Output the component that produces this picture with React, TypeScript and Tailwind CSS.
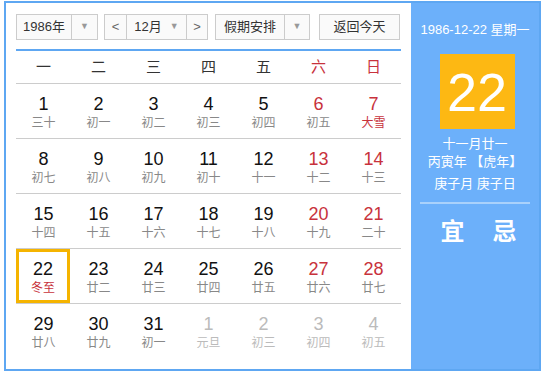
import React from 'react';

type Day = { n: number; l: string; dim?: boolean; red?: boolean; lred?: boolean; today?: boolean };

const weekdays = ['一', '二', '三', '四', '五', '六', '日'];

const rows: Day[][] = [
  [
    { n: 1, l: '三十' },
    { n: 2, l: '初一' },
    { n: 3, l: '初二' },
    { n: 4, l: '初三' },
    { n: 5, l: '初四' },
    { n: 6, l: '初五', red: true },
    { n: 7, l: '大雪', red: true, lred: true },
  ],
  [
    { n: 8, l: '初七' },
    { n: 9, l: '初八' },
    { n: 10, l: '初九' },
    { n: 11, l: '初十' },
    { n: 12, l: '十一' },
    { n: 13, l: '十二', red: true },
    { n: 14, l: '十三', red: true },
  ],
  [
    { n: 15, l: '十四' },
    { n: 16, l: '十五' },
    { n: 17, l: '十六' },
    { n: 18, l: '十七' },
    { n: 19, l: '十八' },
    { n: 20, l: '十九', red: true },
    { n: 21, l: '二十', red: true },
  ],
  [
    { n: 22, l: '冬至', lred: true, today: true },
    { n: 23, l: '廿二' },
    { n: 24, l: '廿三' },
    { n: 25, l: '廿四' },
    { n: 26, l: '廿五' },
    { n: 27, l: '廿六', red: true },
    { n: 28, l: '廿七', red: true },
  ],
  [
    { n: 29, l: '廿八' },
    { n: 30, l: '廿九' },
    { n: 31, l: '初一' },
    { n: 1, l: '元旦', dim: true },
    { n: 2, l: '初三', dim: true },
    { n: 3, l: '初四', dim: true },
    { n: 4, l: '初五', dim: true },
  ],
];

const Caret = () => <span className="text-[9px] text-[#999]">▼</span>;

export default function App() {
  return (
    <div className="ml-[4px] mt-[1px] flex h-[370px] w-[537px] border-2 border-[#5ea7f2] bg-white font-['Liberation_Sans','Noto_Sans_CJK_SC',sans-serif]">
      <div className="w-[405px] px-[10px] pt-[11px]">
        <div className="flex h-[26px] items-stretch text-[13px] text-[#333]">
          <div className="flex w-[82px] border border-[#ccc] bg-[#fafafa]">
            <div className="flex w-[55px] items-center justify-center border-r border-[#ccc]">1986年</div>
            <div className="flex flex-1 items-center justify-center"><Caret /></div>
          </div>
          <div className="ml-[6px] flex w-[104px] border border-[#ccc] bg-[#fafafa]">
            <div className="flex w-[22px] items-center justify-center border-r border-[#ccc] text-[#666]">&lt;</div>
            <div className="flex w-[60px] items-center justify-center gap-[8px] border-r border-[#ccc]">
              12月 <Caret />
            </div>
            <div className="flex flex-1 items-center justify-center text-[#666]">&gt;</div>
          </div>
          <div className="ml-[7px] flex w-[95px] border border-[#ccc] bg-[#fafafa]">
            <div className="flex w-[69px] items-center justify-center border-r border-[#ccc]">假期安排</div>
            <div className="flex flex-1 items-center justify-center"><Caret /></div>
          </div>
          <div className="ml-[9px] flex w-[81px] items-center justify-center border border-[#ccc] bg-[#fafafa]">返回今天</div>
        </div>
        <div className="mt-[9px] border-b-2 border-[#5ea7f2]" />
        <div className="grid h-[33px] grid-cols-7 items-center border-b border-[#ccc] text-[15px]">
          {weekdays.map((w, i) => (
            <div key={w} className={`text-center ${i >= 5 ? 'text-[#c8323c]' : 'text-[#333]'}`}>{w}</div>
          ))}
        </div>
        {rows.map((row, ri) => (
          <div key={ri} className={`grid h-[55px] grid-cols-7 ${ri < rows.length - 1 ? 'border-b border-[#ccc]' : ''}`}>
            {row.map((d, di) => (
              <div
                key={di}
                className={`flex flex-col items-center ${d.today ? 'h-[54px] w-[54px] border-[3px] border-[#f5b400] pt-[7px]' : 'pt-[10px]'}`}
              >
                <div
                  className={`text-[18px] leading-[20px] ${d.dim ? 'text-[#bbb]' : d.red ? 'text-[#c8323c]' : 'text-[#111]'}`}
                >
                  {d.n}
                </div>
                <div
                  className={`text-[12px] leading-[18px] ${d.dim ? 'text-[#bbb]' : d.lred ? 'text-[#c8323c]' : 'text-[#888]'}`}
                >
                  {d.l}
                </div>
              </div>
            ))}
          </div>
        ))}
      </div>
      <div className="flex flex-1 flex-col items-center bg-[#6cb0fa] text-white">
        <div className="mt-[18px] text-[13px] leading-[18px]">1986-12-22 星期一</div>
        <div className="ml-[4px] mt-[15px] flex h-[75px] w-[75px] items-center justify-center bg-[#fdb813] text-[54px] leading-none">22</div>
        <div className="mt-[6px] text-center text-[13px] leading-[18px]">
          <div>十一月廿一</div>
          <div>丙寅年 【虎年】</div>
          <div className="mt-[4px]">庚子月 庚子日</div>
        </div>
        <div className="mt-[9px] w-[110px] border-b-2 border-[#a9d1fb]" />
        <div className="ml-[7px] mt-[13px] flex gap-[28px] text-[24px] font-bold leading-[30px]">
          <span>宜</span>
          <span>忌</span>
        </div>
      </div>
    </div>
  );
}
